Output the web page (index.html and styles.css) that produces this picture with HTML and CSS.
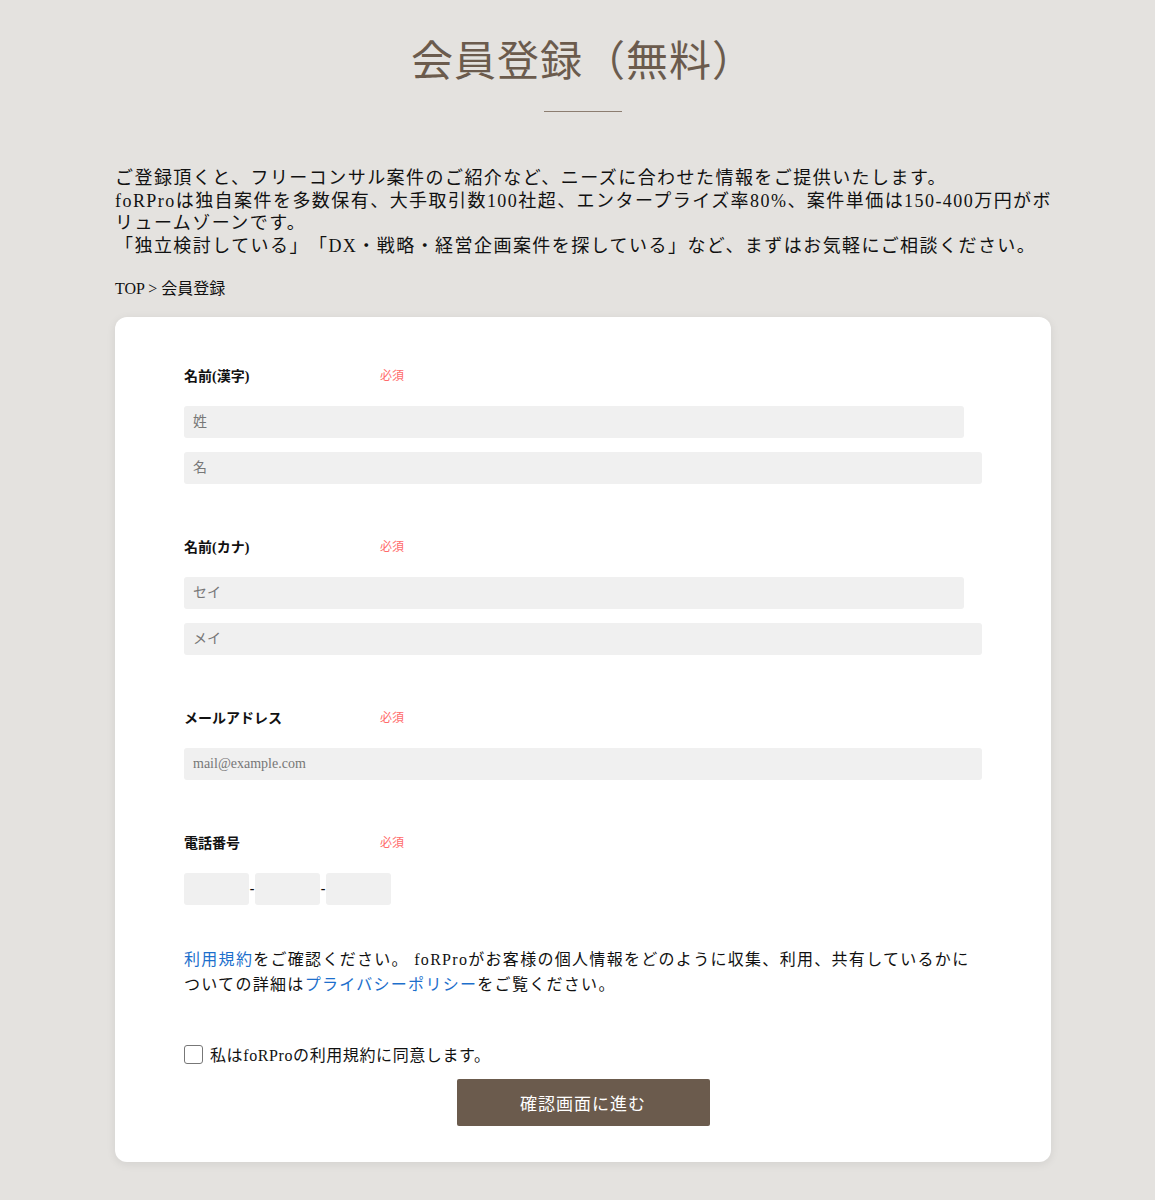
FILE: index.html
```html
<!DOCTYPE html>
<html lang="ja">
<head>
  <meta charset="UTF-8" />
  <meta name="viewport" content="width=device-width, initial-scale=1.0"/>
  <title>会員登録（無料）</title>
  <link rel="stylesheet" href="styles.css">
</head>
<body>
  <div class="wrap">
    <h1 class="page-title">会員登録（無料）</h1>
    <div class="title-line"></div>

    <p class="intro">
      ご登録頂くと、フリーコンサル案件のご紹介など、ニーズに合わせた情報をご提供いたします。<br/>
      foRProは独自案件を多数保有、大手取引数100社超、エンタープライズ率80%、案件単価は150-400万円がボリュームゾーンです。<br/>
      「独立検討している」「DX・戦略・経営企画案件を探している」など、まずはお気軽にご相談ください。
    </p>

    <div class="breadcrumb">TOP &gt; 会員登録</div>

    <form class="card">
      <div class="field">
        <div class="field-head">
          <span class="label">名前(漢字)</span>
          <span class="required">必須</span>
        </div>
        <input class="input short" type="text" placeholder="姓">
        <input class="input" type="text" placeholder="名">
      </div>

      <div class="field">
        <div class="field-head">
          <span class="label">名前(カナ)</span>
          <span class="required">必須</span>
        </div>
        <input class="input short" type="text" placeholder="セイ">
        <input class="input" type="text" placeholder="メイ">
      </div>

      <div class="field">
        <div class="field-head">
          <span class="label">メールアドレス</span>
          <span class="required">必須</span>
        </div>
        <input class="input" type="email" placeholder="mail@example.com">
      </div>

      <div class="field">
        <div class="field-head">
          <span class="label">電話番号</span>
          <span class="required">必須</span>
        </div>
        <div class="tel-row">
          <input class="input tel" type="text">
          <span class="dash">-</span>
          <input class="input tel" type="text">
          <span class="dash">-</span>
          <input class="input tel" type="text">
        </div>
      </div>

      <p class="policy"><a href="#">利用規約</a>をご確認ください。 foRProがお客様の個人情報をどのように収集、利用、共有しているかについての詳細は<a href="#">プライバシーポリシー</a>をご覧ください。</p>

      <label class="agree">
        <span class="box"></span>
        私はfoRProの利用規約に同意します。
      </label>

      <div class="submit-row">
        <button class="submit" type="button">確認画面に進む</button>
      </div>
    </form>
  </div>
</body>
</html>
```

FILE: styles.css
```css
html, body {
  margin: 0;
  padding: 0;
}

body {
  background: #e4e2df;
  color: #111;
  font-family: 'Liberation Serif', 'Noto Sans CJK JP', serif;
  text-spacing-trim: space-all;
  padding-bottom: 40px;
}

.wrap {
  width: 936px;
  margin-left: 115px;
}

.page-title {
  margin: 0;
  padding-top: 35px;
  text-align: center;
  font-size: 42px;
  line-height: 54px;
  font-weight: 400;
  color: #6b5b4d;
  letter-spacing: 1px;
}

.title-line {
  width: 78px;
  height: 1px;
  background: #8c7d70;
  margin: 22px auto 0;
}

.intro {
  margin: 55px -14px 0 0;
  font-size: 18px;
  line-height: 22.5px;
  letter-spacing: 1.45px;
}

.breadcrumb {
  margin-top: 21px;
  font-size: 16px;
  line-height: 22px;
}

.card {
  margin-top: 17px;
  background: #fff;
  border-radius: 12px;
  box-shadow: 0 2px 10px rgba(0, 0, 0, 0.08);
  padding: 48px 69px 36px;
}

.field {
  margin-bottom: 52px;
}

.field-head {
  display: flex;
  align-items: center;
  height: 20px;
  margin-bottom: 21px;
}

.label {
  width: 196px;
  font-size: 14px;
  font-weight: 700;
  color: #111;
}

.required {
  font-size: 12px;
  color: #ff6b6b;
}

.input {
  display: block;
  box-sizing: border-box;
  width: 100%;
  height: 32px;
  border: none;
  border-radius: 3px;
  background: #f0f0f0;
  padding: 0 9px;
  font-family: inherit;
  font-size: 14px;
  color: #333;
  outline: none;
}

.input::placeholder {
  color: #777;
}

.input + .input {
  margin-top: 14px;
}

.input.short {
  width: 780px;
}

.tel-row {
  display: flex;
  align-items: center;
}

.input.tel {
  width: 65px;
  margin: 0;
}

.dash {
  width: 6px;
  font-size: 14px;
  font-weight: 700;
  text-align: center;
}

.policy {
  margin: -10px 0 0;
  font-size: 16px;
  line-height: 25px;
  letter-spacing: 1.3px;
  padding-right: 10px;
}

.policy a {
  color: #1d6fcc;
  text-decoration: none;
}

.agree {
  display: flex;
  align-items: center;
  margin-top: 45px;
  height: 24px;
  font-size: 16px;
  letter-spacing: 0.6px;
}

.box {
  width: 17px;
  height: 17px;
  border: 1px solid #777;
  border-radius: 3px;
  margin-right: 7px;
  background: #fff;
}

.submit-row {
  display: flex;
  justify-content: center;
  margin-top: 13px;
}

.submit {
  width: 253px;
  height: 47px;
  border: none;
  border-radius: 2px;
  background: #6b5b4d;
  color: #fff;
  font-family: inherit;
  font-size: 17px;
  letter-spacing: 1px;
  cursor: pointer;
}
```
